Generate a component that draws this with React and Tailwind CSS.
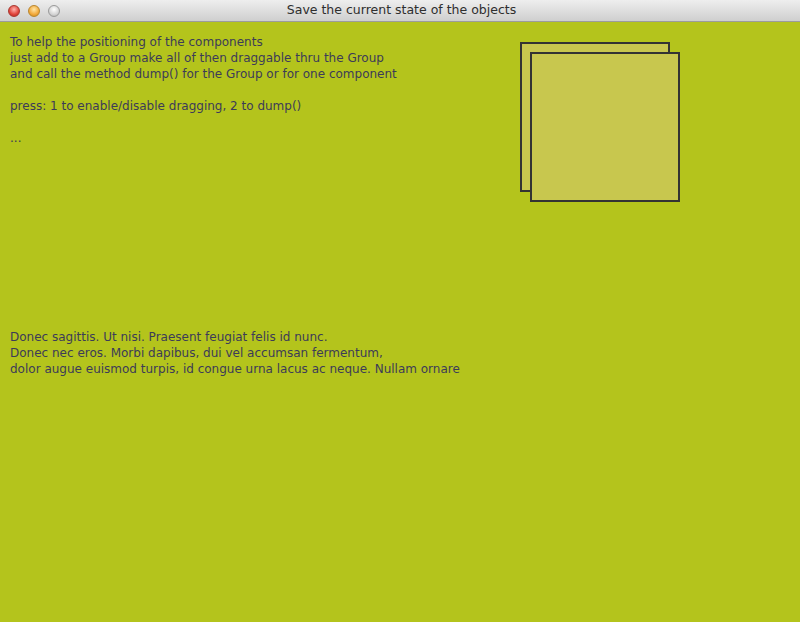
import React from 'react';

const lights = [
  { id: 'close', bg: 'bg-[radial-gradient(circle_at_50%_35%,#ffb3ad,#e0443a_60%,#b02a22)]', ring: 'border-[#a8372f]' },
  { id: 'min', bg: 'bg-[radial-gradient(circle_at_50%_35%,#ffe7a8,#f2a93b_60%,#c98618)]', ring: 'border-[#b8862e]' },
  { id: 'max', bg: 'bg-[radial-gradient(circle_at_50%_35%,#ffffff,#d4d4d4_60%,#a9a9a9)]', ring: 'border-[#9a9a9a]' },
];

const topLines = [
  'To help the positioning of the components',
  'just add to a Group make all of then draggable thru the Group',
  'and call the method dump() for the Group or for one component',
  '',
  'press: 1 to enable/disable dragging, 2 to dump()',
  '',
  '...',
];

const bottomLines = [
  'Donec sagittis. Ut nisi. Praesent feugiat felis id nunc.',
  'Donec nec eros. Morbi dapibus, dui vel accumsan fermentum,',
  'dolor augue euismod turpis, id congue urna lacus ac neque. Nullam ornare',
];

const TextBlock = ({ lines }) => (
  <div className="text-[12px] leading-[16px] text-[#3c3b58] whitespace-pre">
    {lines.map((l, i) => (
      <div key={i} className="h-[16px]">{l || ' '}</div>
    ))}
  </div>
);

const App = () => {
  return (
    <div className="w-[800px] h-[622px] flex flex-col overflow-hidden" style={{ fontFamily: '"DejaVu Sans", sans-serif' }}>
      <div className="h-[22px] shrink-0 relative flex items-center justify-center bg-gradient-to-b from-[#eeeeee] to-[#cfcfcf] border-b border-[#9c9c9c]">
        <div className="absolute left-[8px] top-[5px] flex gap-[8px]">
          {lights.map(l => (
            <div key={l.id} className={`w-[12px] h-[12px] rounded-full border ${l.bg} ${l.ring}`} />
          ))}
        </div>
        <span className="text-[12.5px] text-[#2e2e2e] ml-[3px]">Save the current state of the objects</span>
      </div>

      <div className="flex-1 bg-[#b4c41c] px-[10px] pt-[12px]">
        <div className="flex">
          <div className="w-[510px]">
            <TextBlock lines={topLines} />
          </div>
          <div className="relative mt-[8px] w-[160px] h-[160px]">
            <div className="w-[150px] h-[150px] border-2 border-[#333333] bg-[#c8c74e]" />
            <div className="absolute left-[10px] top-[10px] w-[150px] h-[150px] border-2 border-[#333333] bg-[#c8c74e]" />
          </div>
        </div>
        <div className="mt-[127px]">
          <TextBlock lines={bottomLines} />
        </div>
      </div>
    </div>
  );
};

export default App;
